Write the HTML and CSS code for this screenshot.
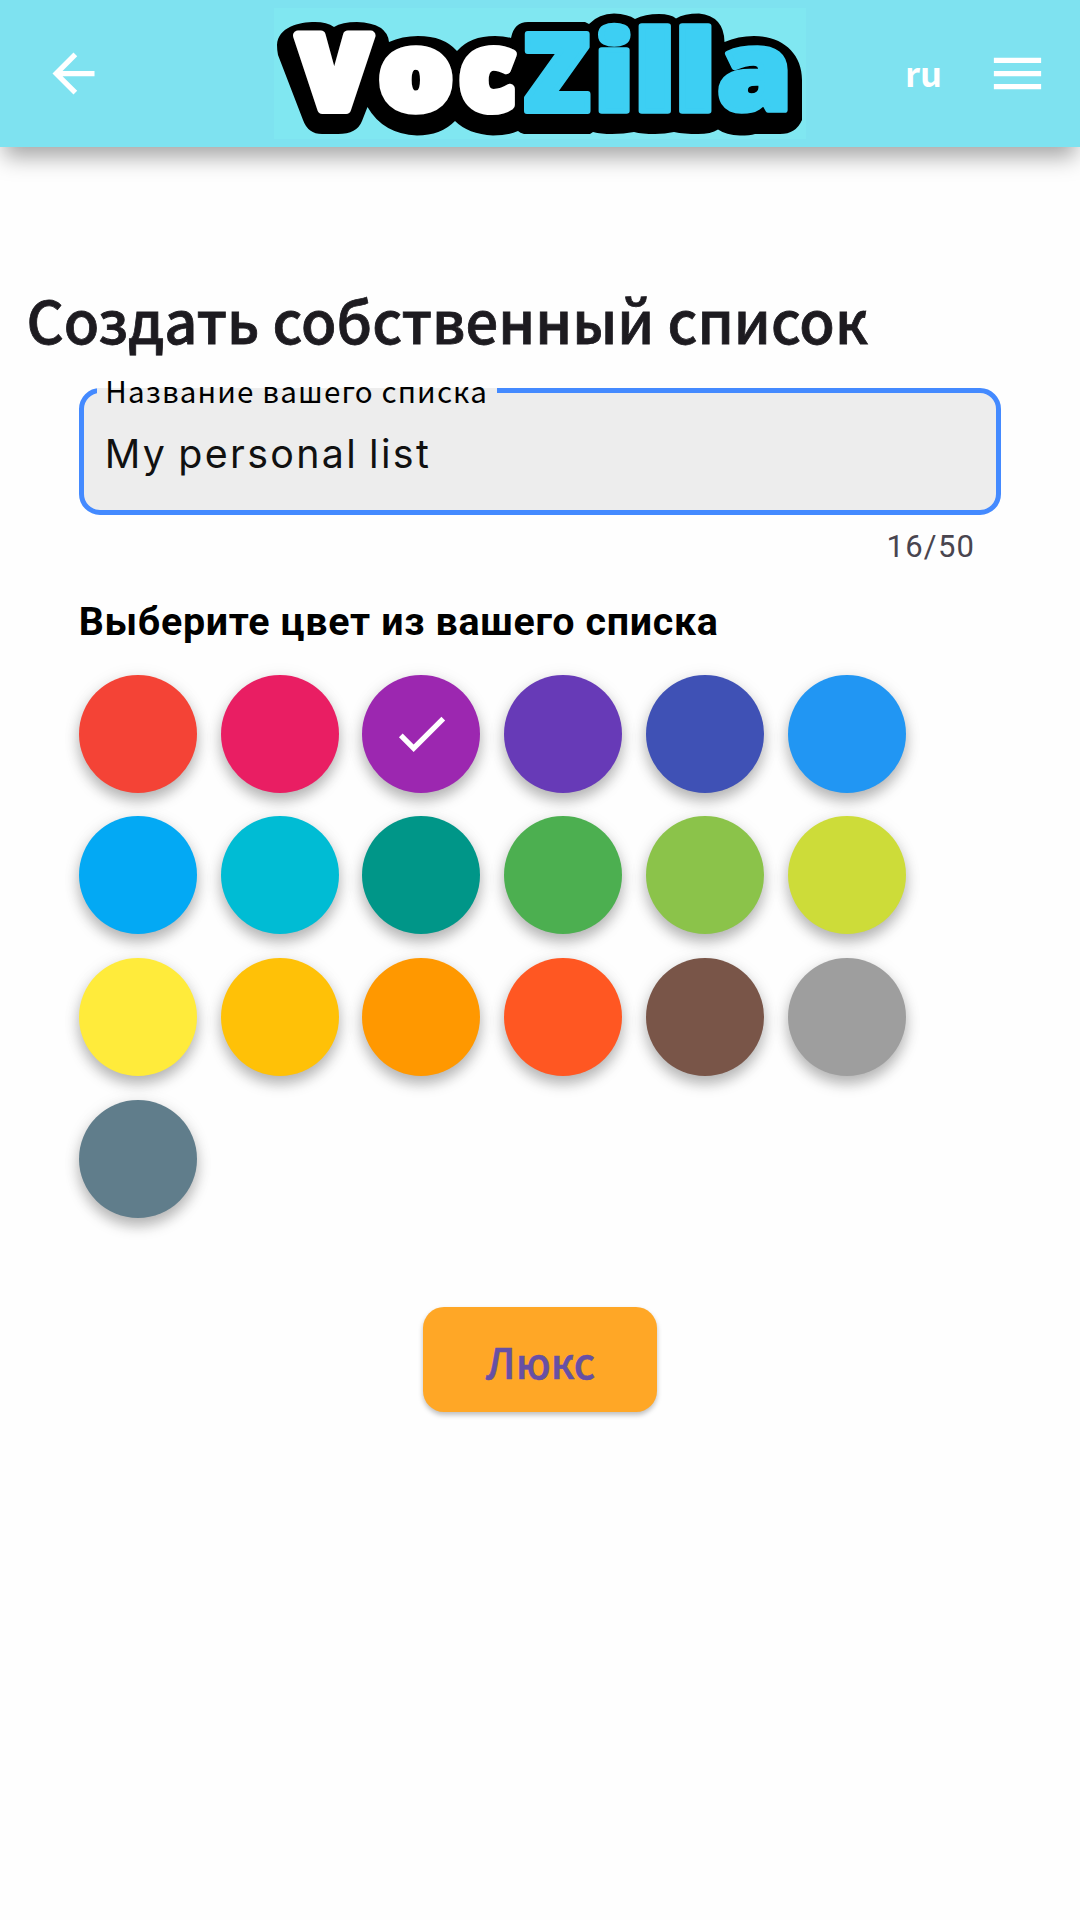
FILE: index.html
```html
<!DOCTYPE html>
<html lang="ru">
<head>
<meta charset="utf-8">
<title>VocZilla</title>
<link rel="stylesheet" href="styles.css">
</head>
<body>
<header class="appbar">
  <button class="icon-button" aria-label="Назад">
    <svg class="icon" viewBox="0 0 24 24"><path d="M20 11H7.83l5.59-5.59L12 4l-8 8 8 8 1.41-1.41L7.83 13H20v-2z"/></svg>
  </button>
  <svg class="logo" viewBox="274 8 532 131" role="img" aria-label="VocZilla">
    <path class="logo-plate" d="M277 45C278 27 299 22 315 22Q327 22 334 27Q342 22 357 22Q387 23 389 42Q402 36 418 36Q444 36 457 51Q470 36 495 36Q504 36 511 38Q514 22 528 22H585L589 24Q599 13.500 614 13.500Q628 14 635 19Q645 14 659 14Q671 14 676 18.500Q684 13.500 699 13.500Q724 16 724.500 42Q738 36 754 36C782 36 802 53 802 80V120Q796 134 780 134H755Q750 135.500 740 135.500Q726 135 718 129.500Q711 134 698 134Q684 134 674 132Q665 134 655 134Q642 134 634 132Q624 134 612 134Q601 134 593 132L590 134H524Q520 133 518 131Q509 135.500 493 135.500Q468 134 455 121Q441 135.500 417 135.500Q383 134 367.500 107L362 121Q357 134 338 134H322Q308 134 303 120L278 55Q277 50 277 45Z"/>
    <g class="logo-light">
      <text class="bold" transform="translate(298 109) scale(1.045 1.035)">V</text>
      <text class="bold" transform="translate(379.400 109) scale(1.143 1.053)">o</text>
      <text class="bold" transform="translate(460 109) scale(1.01 1.053)">c</text>
    </g>
    <g class="logo-blue">
      <text transform="translate(523.800 111) scale(1.088 1.09)">Z</text>
      <text transform="translate(593.300 111) scale(1.286 1.104)">i</text>
      <text transform="translate(632.900 111) scale(1.35 1.118)">l</text>
      <text transform="translate(673.400 111) scale(1.35 1.118)">l</text>
      <text transform="translate(716.900 109.800) scale(1.208 1.103)">a</text>
    </g>
  </svg>
  <span class="language">ru</span>
  <button class="icon-button" aria-label="Меню">
    <svg class="icon" viewBox="0 0 24 24"><path d="M3 18h18v-2H3v2zm0-5h18v-2H3v2zm0-7v2h18V6H3z"/></svg>
  </button>
</header>
<main class="page">
  <h1 class="title">Создать собственный список</h1>
  <form class="form">
    <div class="field">
      <div class="field-box"><span class="field-value">My personal list</span></div>
      <label class="field-label">Название вашего списка</label>
    </div>
    <p class="counter">16/50</p>
    <h2 class="palette-title">Выберите цвет из вашего списка</h2>
    <div class="palette">
      <span class="swatch red"></span>
      <span class="swatch pink"></span>
      <span class="swatch purple"><svg class="icon" viewBox="0 0 24 24"><path d="M9 16.170L4.830 12l-1.420 1.410L9 19 21 7l-1.410-1.410z"/></svg></span>
      <span class="swatch deep-purple"></span>
      <span class="swatch indigo"></span>
      <span class="swatch blue"></span>
      <span class="swatch light-blue"></span>
      <span class="swatch cyan"></span>
      <span class="swatch teal"></span>
      <span class="swatch green"></span>
      <span class="swatch light-green"></span>
      <span class="swatch lime"></span>
      <span class="swatch yellow"></span>
      <span class="swatch amber"></span>
      <span class="swatch orange"></span>
      <span class="swatch deep-orange"></span>
      <span class="swatch brown"></span>
      <span class="swatch grey"></span>
      <span class="swatch blue-grey"></span>
    </div>
    <button class="submit" type="button">Люкс</button>
  </form>
</main>
</body>
</html>
```
FILE: styles.css
```css
* { box-sizing: border-box; }

body {
  margin: 0;
  min-height: 1920px;
  background: #fefefe;
  color: #000;
  font-family: Roboto, sans-serif;
}

h1, h2, p { margin: 0; }

button {
  padding: 0;
  border: 0;
  background: none;
  font: inherit;
}

.icon {
  display: block;
  width: 63px;
  height: 63px;
  fill: #fff;
}

/* App bar */
.appbar {
  display: flex;
  align-items: center;
  height: 147px;
  padding: 0 31px 0 42px;
  background: #7ee2f0;
  box-shadow: 0 14px 21px -4px rgba(0, 0, 0, .35);
}

.logo {
  width: 532px;
  height: 131px;
  margin-left: 169px;
  overflow: visible;
  background: #80e7f1;
}

.logo text {
  font: 800 100px "Open Sans", sans-serif;
  stroke-width: 6px;
  stroke-linejoin: round;
  vector-effect: non-scaling-stroke;
}

.logo .bold { stroke-width: 10px; }
.logo-light { fill: #fff; stroke: #fff; }
.logo-blue { fill: #3dcff3; stroke: #3dcff3; }

.language {
  width: 43px;
  margin: 0 auto 0 99px;
  padding-bottom: 4px;
  color: #fff;
  font: 700 34.500px/50px "Noto Sans CJK JP", sans-serif;
}

/* Page */
.page { padding: 127px 0 0; }

.title {
  padding-left: 26.500px;
  color: #1d1b20;
  font: 500 57.750px/90px "Noto Sans CJK JP", sans-serif;
  letter-spacing: .040px;
  -webkit-text-stroke: .800px #1d1b20;
}

.form {
  display: flex;
  flex-direction: column;
  padding: 24px 78.750px 0;
}

.field { position: relative; }

.field-box {
  display: flex;
  align-items: center;
  height: 127px;
  padding: 5px 0 0 21px;
  border: 5.500px solid #448aff;
  border-radius: 21px;
  background: #ededed;
}

.field-value {
  color: #111;
  font: 400 39.375px/50px Inter, sans-serif;
  letter-spacing: 2.350px;
  word-spacing: -2.500px;
}

.field-label {
  position: absolute;
  top: -13px;
  left: 18px;
  padding: 0 9px 0 8.500px;
  background: linear-gradient(#fefefe 13px, #ededed 13px);
  font: 400 29.530px/32px "Noto Sans CJK JP", sans-serif;
  letter-spacing: 1.160px;
}

.counter {
  margin-top: 14px;
  padding-right: 26px;
  color: #49454f;
  font-size: 31px;
  line-height: 36px;
  letter-spacing: 1.250px;
  text-align: right;
}

.palette-title {
  margin-top: 34px;
  font-size: 39.375px;
  line-height: 46px;
  font-weight: 700;
  letter-spacing: .690px;
}

.palette {
  display: grid;
  grid-template-columns: repeat(6, 118.125px);
  gap: 23.625px;
  margin-top: 29.500px;
}

.swatch {
  display: grid;
  place-items: center;
  height: 118.125px;
  border-radius: 50%;
  box-shadow: 0 8px 14px rgba(0, 0, 0, .26), 0 2px 18px rgba(0, 0, 0, .08);
}

.red { background: #f44336; }
.pink { background: #e91e63; }
.purple { background: #9c27b0; }
.deep-purple { background: #673ab7; }
.indigo { background: #3f51b5; }
.blue { background: #2196f3; }
.light-blue { background: #03a9f4; }
.cyan { background: #00bcd4; }
.teal { background: #009688; }
.green { background: #4caf50; }
.light-green { background: #8bc34a; }
.lime { background: #cddc39; }
.yellow { background: #ffeb3b; }
.amber { background: #ffc107; }
.orange { background: #ff9800; }
.deep-orange { background: #ff5722; }
.brown { background: #795548; }
.grey { background: #9e9e9e; }
.blue-grey { background: #607d8b; }

.submit {
  align-self: center;
  width: 234px;
  height: 105px;
  margin-top: 89px;
  padding: 4px 0 0 1px;
  border-radius: 21px;
  background: #ffa726;
  box-shadow: 0 3px 5px rgba(0, 0, 0, .25);
  color: #6750a4;
  font: 500 41.500px/60px "Noto Sans CJK JP", sans-serif;
  -webkit-text-stroke: .500px #6750a4;
}
```
